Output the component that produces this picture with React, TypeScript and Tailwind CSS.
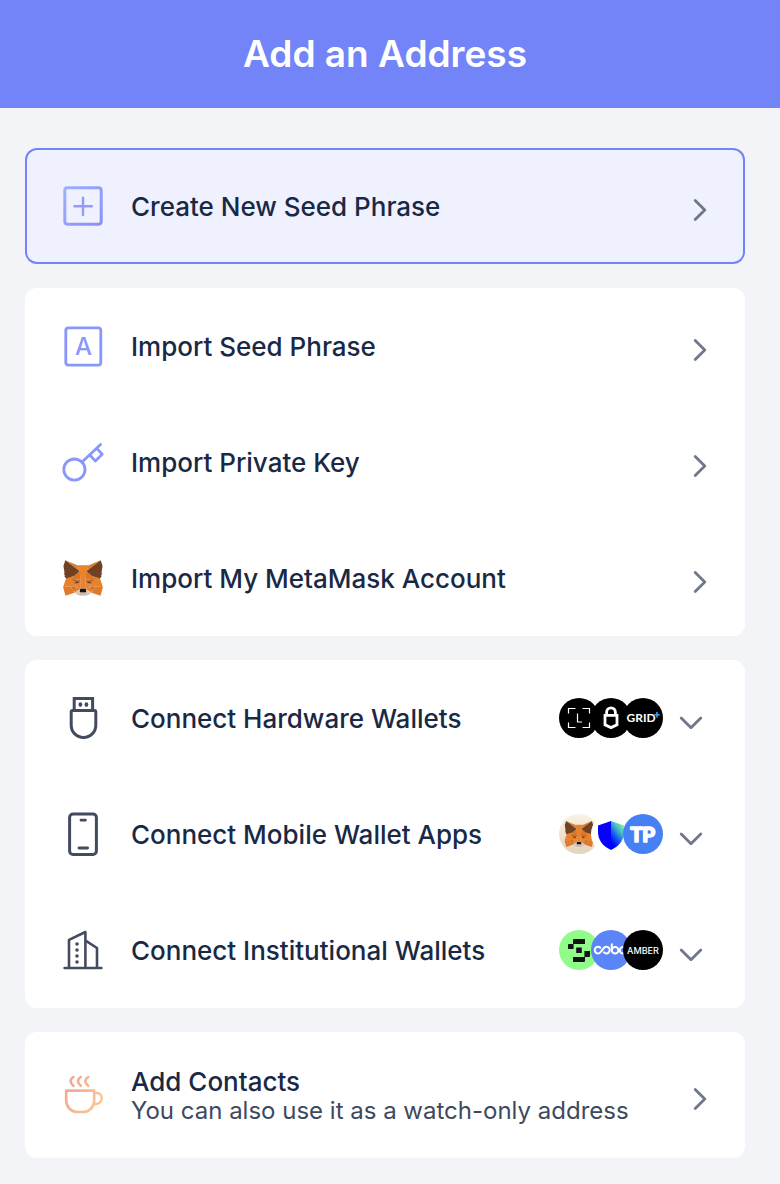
import type { ReactNode } from "react";
import { clsx } from "clsx";

/* ---------- Row icons, all on a 44px grid ---------- */

function PlusSquareIcon() {
  return (
    <svg viewBox="0 0 44 44" className="size-11" fill="none" aria-hidden="true">
      <defs>
        <linearGradient id="plus-stroke" x1="0" y1="0" x2="1" y2="1">
          <stop offset="0" stopColor="#9db0ff" />
          <stop offset="1" stopColor="#8a8ef6" />
        </linearGradient>
      </defs>
      <rect x="3.8" y="3.8" width="36.4" height="36.4" rx="2.6" stroke="url(#plus-stroke)" strokeWidth="3" />
      <path d="M22 13.6V31M13.4 22.2h17.4" stroke="#929bfa" strokeWidth="2.4" strokeLinecap="round" />
    </svg>
  );
}

function SeedIcon() {
  return (
    <svg viewBox="0 0 44 44" className="size-11" fill="none" aria-hidden="true">
      <rect x="4.8" y="3.8" width="35" height="37.4" rx="2.6" stroke="#8997fb" strokeWidth="2.8" />
      <text x="22.4" y="31" textAnchor="middle" fill="#8997fb" className="font-['Inter',sans-serif] text-[24px] font-medium">
        A
      </text>
    </svg>
  );
}

function KeyIcon() {
  return (
    <svg viewBox="0 0 44 44" className="size-11" fill="none" stroke="#8997fb" strokeWidth="2.8" aria-hidden="true">
      <circle cx="13.4" cy="29.6" r="10.6" />
      <path d="M20.8 22.2 39.6 4.4M28.8 15l5.6 6 6.8-6.8-5.2-5.6" strokeLinecap="round" strokeLinejoin="round" />
    </svg>
  );
}

function FoxHalf() {
  return (
    <>
      <path fill="#c9b8ad" d="M60.8 173.3l27.5 7.3V171l2.3-2.3h15.9v19.2H89.4l-20.8-9z" />
      <path fill="#161616" d="M88.6 150.4 85.3 171l2.8-1.3h18.4v-19.6l-12 .1z" />
      <path fill="#e8832b" d="M75.4 27l13.5 31.5 6.2 91.7h11.4V27z" />
      <path fill="#e8832b" d="M16.3 96.2.6 141.8l39.3-2.3h25.4v-19.7l-1.2-40.5-5.6 4.5z" />
      <path fill="#c56a28" d="M46.1 101.3l46.2 1.1-5.1 23.6-21.9-5.6z" />
      <path fill="#de7b2e" d="M46.1 101.8l19.2 18v18z" />
      <path fill="#e8832b" d="M65.3 120.4l22.4 5.6 7.4 24.2-5.1 2.8-24.7-14.6z" />
      <path fill="#e27d2a" d="M65.3 138.4l-4.5 34.9 29.8-20.9z" />
      <path fill="#d9752a" d="M92.3 102.4l2.8 47.8-8.5-24.5z" />
      <path fill="#d07029" d="M39.4 138.9l25.9-.5-4.5 34.9z" />
      <path fill="#e07a2a" d="M12.9 188.4l47.9-15.1-21.4-34.4-38.8 2.9z" />
      <path fill="#de7424" d="M88.9 58.5 64.7 78.8l-18.6 22.5 46.2 1.6z" />
      <path fill="#d9c9bd" d="M60.8 173.3l29.8-20.9-2.3 18v10.2l-20.2-4z" />
      <path fill="#2c4156" d="M70.3 112.5l-6.2 12.9 22-5.6z" />
      <path fill="#dd7c30" d="M12.4.6l76.5 57.9L75.9 27z" />
      <path
        fill="#704223"
        d="M12.4.6 2.3 31.5l5.6 33.8-4 2.2 5.7 5.1-4.5 3.9 6.2 5.6-4 3.4 9 11.3 42.2-13L88.9 58.5z"
      />
    </>
  );
}

function Fox({ className }: { className: string }) {
  return (
    <svg viewBox="0 0 212 189" className={className} aria-hidden="true">
      <FoxHalf />
      <g transform="matrix(-1 0 0 1 212 0)">
        <FoxHalf />
      </g>
    </svg>
  );
}

function UsbIcon() {
  return (
    <svg viewBox="0 0 44 44" className="size-11" fill="none" stroke="#434b61" strokeWidth="3" aria-hidden="true">
      <path d="M13.2 14V2.6h18.4V14" />
      <path d="M11.6 14.4h21.8a1.4 1.4 0 0 1 1.4 1.4v13.4a12.3 12.3 0 0 1-24.6 0V15.8a1.4 1.4 0 0 1 1.4-1.4z" />
      <ellipse cx="19.4" cy="8.6" rx="1.9" ry="2.3" fill="#434b61" stroke="none" />
      <ellipse cx="25.4" cy="8.6" rx="1.9" ry="2.3" fill="#434b61" stroke="none" />
    </svg>
  );
}

function PhoneIcon() {
  return (
    <svg viewBox="0 0 44 44" className="size-11" fill="none" stroke="#434b61" strokeWidth="3" aria-hidden="true">
      <rect x="8.6" y="2" width="26.8" height="40.4" rx="3.4" />
      <path d="M20 8.2h4.4M18 36h8.6" strokeWidth="2.8" strokeLinecap="round" />
    </svg>
  );
}

function BuildingIcon() {
  return (
    <svg viewBox="0 0 44 44" className="size-11" fill="none" stroke="#434b61" strokeWidth="2.6" aria-hidden="true">
      <path d="M3.6 40h36.8M8 40V11.8L24.4 4v36M24.6 12.6 36 20V40" strokeLinecap="round" strokeLinejoin="round" />
      <g fill="#434b61" stroke="none">
        <circle cx="16" cy="16" r="1.8" />
        <circle cx="16" cy="22" r="1.8" />
        <circle cx="16" cy="28" r="1.8" />
        <circle cx="16" cy="34" r="1.8" />
      </g>
    </svg>
  );
}

function CupIcon() {
  return (
    <svg viewBox="0 0 44 44" className="size-11" fill="none" stroke="url(#cup-stroke)" aria-hidden="true">
      <defs>
        <linearGradient id="cup-stroke" gradientUnits="userSpaceOnUse" x1="4" y1="8" x2="41" y2="30">
          <stop offset="0" stopColor="#f1a38f" />
          <stop offset="1" stopColor="#fbc597" />
        </linearGradient>
      </defs>
      <path
        d="M5.2 17.6h28v9.6c0 7-5 11.8-11.2 11.8h-5.6c-6.2 0-11.2-4.8-11.2-11.8z"
        strokeWidth="2.6"
        strokeLinejoin="round"
      />
      <path d="M33.4 20c4.6-.6 7.4 1.6 7.4 5.2s-3 6-8 6" strokeWidth="2.4" />
      <path
        d="M12.4 4c-4 2.6-3.4 6 0 8.8M19.8 4c-4 2.6-3.4 6 0 8.8M27.2 4c-4 2.6-3.4 6 0 8.8"
        strokeWidth="2.6"
        strokeLinecap="round"
      />
    </svg>
  );
}

function ChevronRight() {
  return (
    <svg viewBox="0 0 26 26" className="mt-2 size-[26px] shrink-0" fill="none" aria-hidden="true">
      <path d="M8.2 3.4 17.8 13l-9.6 9.6" stroke="#6f778a" strokeWidth="2.8" strokeLinecap="round" strokeLinejoin="round" />
    </svg>
  );
}

function ChevronDown() {
  return (
    <svg viewBox="0 0 26 26" className="mt-2 size-[26px] shrink-0" fill="none" aria-hidden="true">
      <path d="M3.2 9 13 18.8 22.8 9" stroke="#6f778a" strokeWidth="2.8" strokeLinecap="round" strokeLinejoin="round" />
    </svg>
  );
}

/* ---------- Wallet brand badges ---------- */

function Badge({ className, children }: { className: string; children: ReactNode }) {
  return (
    <span className={clsx("flex size-10 shrink-0 items-center justify-center overflow-hidden rounded-full", className)}>
      {children}
    </span>
  );
}

function LedgerBadge() {
  return (
    <Badge className="bg-black">
      <svg viewBox="0 0 40 40" className="size-10" fill="none" stroke="#fff" strokeWidth="1.2" aria-hidden="true">
        <path d="M9.5 15.5v-5h7M23.5 10.5h7v5M9.5 24.5v5h7M23.5 29.5h7v-5M18.5 15.5V24H23" />
      </svg>
    </Badge>
  );
}

function TrezorBadge() {
  return (
    <Badge className="bg-black">
      <svg viewBox="0 0 40 40" className="size-10" fill="none" stroke="#fff" strokeWidth="2.8" aria-hidden="true">
        <path d="M15.6 17v-2.8a4.4 4.4 0 0 1 8.8 0V17M14 17.4h12v9.4l-6 2.8-6-2.8z" />
      </svg>
    </Badge>
  );
}

function GridBadge() {
  return (
    <Badge className="bg-black">
      <svg viewBox="0 0 40 40" className="size-10" aria-hidden="true">
        <text x="3.6" y="24" fill="#fff" className="font-['Lato','Inter',sans-serif] text-[12px] font-bold">
          GRID
        </text>
        <path d="M34 14v5.6M31.2 16.8h5.6" stroke="#3da5e8" strokeWidth="1.6" />
      </svg>
    </Badge>
  );
}

function MetaMaskBadge() {
  return (
    <Badge className="bg-linear-to-b from-[#faf2e6] to-[#e3d3bc]">
      <Fox className="h-[26px] w-[30px]" />
    </Badge>
  );
}

function TrustBadge() {
  return (
    <Badge className="bg-white">
      <svg viewBox="0 0 40 40" className="size-10" aria-hidden="true">
        <defs>
          <linearGradient id="trust-right" x1="0.8" y1="0" x2="0.3" y2="0.9">
            <stop offset="0.1" stopColor="#6df5a0" />
            <stop offset="0.35" stopColor="#4cb8c8" />
            <stop offset="0.65" stopColor="#1560f0" />
            <stop offset="1" stopColor="#0000ff" />
          </linearGradient>
        </defs>
        <path d="M7 11.4 20 7v29C11 32 7 25 7 18z" fill="#0500ff" />
        <path d="M20 7l13 4.4V18c0 7-4 14-13 18z" fill="url(#trust-right)" />
      </svg>
    </Badge>
  );
}

function TokenPocketBadge() {
  return (
    <Badge className="bg-[#4680f5]">
      <svg viewBox="0 0 40 40" className="size-10" aria-hidden="true">
        <text
          x="19.8"
          y="27.6"
          textAnchor="middle"
          fill="#fff"
          stroke="#fff"
          strokeWidth="1.6"
          strokeLinejoin="round"
          className="font-['Roboto','Inter',sans-serif] text-[20px] font-bold"
        >
          TP
        </text>
      </svg>
    </Badge>
  );
}

function SafeBadge() {
  return (
    <Badge className="bg-[#90fd8a]">
      <svg viewBox="0 0 40 40" className="size-10" fill="#121312" aria-hidden="true">
        <path d="M15 9h11v5H14.6v5H9v-4a1 1 0 0 1 1-1h4v-4a1 1 0 0 1 1-1z" />
        <path d="M17.2 17.4h5.6v5.6h-5.6z" />
        <path d="M25.4 21H31v5a1 1 0 0 1-1 1h-4v4a1 1 0 0 1-1 1H14v-5h11.4z" />
      </svg>
    </Badge>
  );
}

function CoboBadge() {
  return (
    <Badge className="bg-[#5b84f7]">
      <svg viewBox="0 0 40 40" className="size-10" fill="none" stroke="#fff" strokeWidth="2" aria-hidden="true">
        <path
          d="M9.4 17.8a3.3 3.3 0 1 0 0 4.6l3.6-4.6a3.3 3.3 0 1 1 0 4.6M20.8 14.2v6a3.3 3.3 0 1 0 3.3-3.3 3.3 3.3 0 0 0-3.3 3.3"
          strokeLinecap="round"
        />
        <circle cx="32" cy="20.2" r="3.2" />
      </svg>
    </Badge>
  );
}

function AmberBadge() {
  return (
    <Badge className="bg-black">
      <span className="font-['Inter',sans-serif] text-[9px] leading-none font-medium text-white">AMBER</span>
    </Badge>
  );
}

/* ---------- Layout ---------- */

type RowProps = {
  icon: ReactNode;
  title: string;
  description?: string;
  badges?: ReactNode;
};

function Row({ icon, title, description, badges }: RowProps) {
  return (
    <button
      type="button"
      aria-expanded={badges ? false : undefined}
      className={clsx(
        "flex w-full cursor-pointer items-center pl-9 text-left",
        badges ? "pr-[41px]" : "pr-8",
        description ? "h-[126px]" : "h-[116px]",
      )}
    >
      <span className="flex size-11 shrink-0 items-center justify-center">{icon}</span>
      <span className="ml-[26px] flex min-w-0 flex-1 flex-col pt-0.5">
        <span className="text-[26px] leading-[30px] font-medium text-[#192945]">{title}</span>
        {description && <span className="text-2xl leading-7 text-[#3e495e]">{description}</span>}
      </span>
      {badges && <span className="mr-[15px] flex -space-x-2">{badges}</span>}
      {badges ? <ChevronDown /> : <ChevronRight />}
    </button>
  );
}

function Card({ children }: { children: ReactNode }) {
  return <section className="rounded-xl bg-white">{children}</section>;
}

export default function App() {
  return (
    <div className="min-h-screen bg-[#f2f4f7] font-['Inter','Liberation_Sans',sans-serif]">
      <header className="flex h-[108px] items-center justify-center bg-[#7384f8] pr-2.5">
        <h1 className="text-[37px] leading-[48px] font-semibold text-white">Add an Address</h1>
      </header>

      <main className="flex flex-col gap-6 pt-10 pr-[35px] pb-[26px] pl-[25px]">
        <section className="rounded-xl bg-[#eff1ff] inset-ring-2 inset-ring-[#7384f8]">
          <Row icon={<PlusSquareIcon />} title="Create New Seed Phrase" />
        </section>

        <Card>
          <Row icon={<SeedIcon />} title="Import Seed Phrase" />
          <Row icon={<KeyIcon />} title="Import Private Key" />
          <Row icon={<Fox className="h-9 w-10" />} title="Import My MetaMask Account" />
        </Card>

        <Card>
          <Row
            icon={<UsbIcon />}
            title="Connect Hardware Wallets"
            badges={
              <>
                <LedgerBadge />
                <TrezorBadge />
                <GridBadge />
              </>
            }
          />
          <Row
            icon={<PhoneIcon />}
            title="Connect Mobile Wallet Apps"
            badges={
              <>
                <MetaMaskBadge />
                <TrustBadge />
                <TokenPocketBadge />
              </>
            }
          />
          <Row
            icon={<BuildingIcon />}
            title="Connect Institutional Wallets"
            badges={
              <>
                <SafeBadge />
                <CoboBadge />
                <AmberBadge />
              </>
            }
          />
        </Card>

        <Card>
          <Row icon={<CupIcon />} title="Add Contacts" description="You can also use it as a watch-only address" />
        </Card>
      </main>
    </div>
  );
}
